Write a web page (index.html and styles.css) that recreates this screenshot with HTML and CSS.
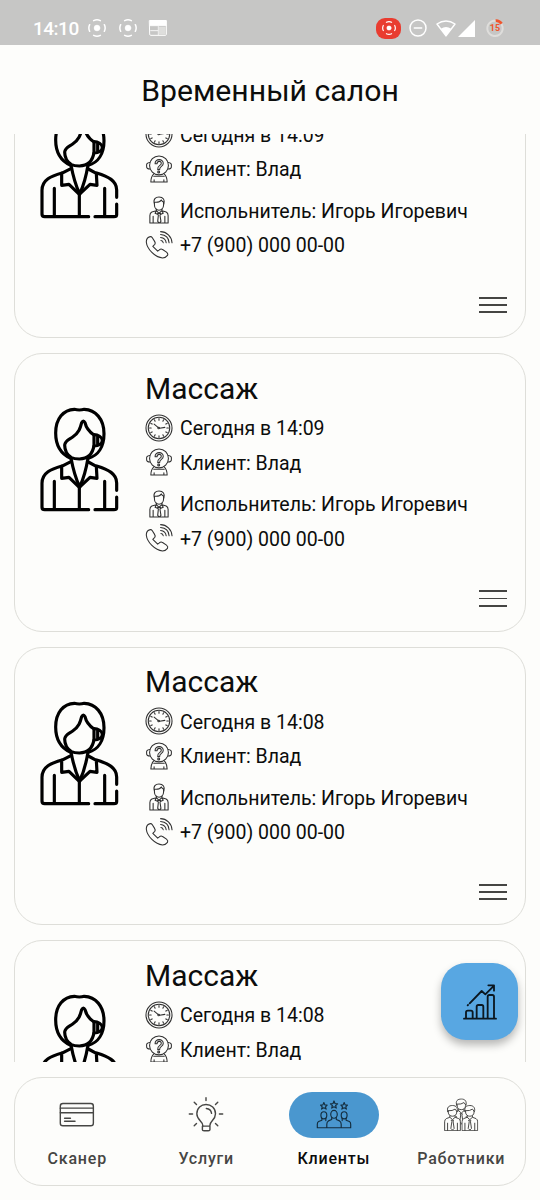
FILE: index.html
```html
<!DOCTYPE html>
<html lang="ru">
<head>
<meta charset="utf-8">
<title>Временный салон</title>
<link rel="stylesheet" href="styles.css">
</head>
<body>
<svg class="sprite" aria-hidden="true">
  <symbol id="person" viewBox="0 0 330 390">
    <g stroke-width="9.5">
      <path d="M137 190C106 176 92 148 92 114C92 70 116 44 148 43Q163 47 178 43C211 44 237 72 237 116C237 156 219 182 190 190"/>
      <path d="M139 188C124 178 119 164 119 150C120 137 131 134 143 126C162 113 166 99 170 83Q175 73 180 83C184 101 195 112 207 120V151C203 178 187 192 163 192Q148 192 139 188Z"/>
      <path d="M207 119C220 119 230 126 232 135C232 147 221 153 207 153M218 124V149"/>
      <path d="M138 189Q147 239 164 276Q181 239 189 189"/>
      <path d="M139 199L110 214V250L132 247L163 277L195 247L216 250L214 214L190 201"/>
      <path d="M111 213C79 222 51 233 51 265V337Q51 344 59 344H191M215 213C250 224 275 236 275 264V286M275 306V338Q275 344 267 344H210M88 259V343M239 259V343M163 277V343"/>
    </g>
  </symbol>
  <symbol id="clock" viewBox="0 0 86 86">
    <circle cx="43" cy="43" r="40"/><circle cx="43" cy="43" r="33"/>
    <path d="M28 31L40 41M45 44L61 41"/><circle cx="42" cy="43" r="2.5"/>
    <path d="M43 14V19M43 67V72M14 43H19M67 43H72M29 18L31 22M57 18L55 22M18 29L22 31M68 29L64 31M18 57L22 55M68 57L64 55M29 68L31 64M57 68L55 64"/>
  </symbol>
  <symbol id="client" viewBox="0 0 86 86">
    <circle cx="43" cy="32" r="29"/>
    <path d="M15 23C6 24 4 27 5 34C4 40 8 43 15 43M71 23C80 24 82 27 81 34C82 40 78 43 71 43"/>
    <path d="M31 27C30 10 57 10 56 26C56 36 44 34 45 45H39C38 30 50 34 50 25C50 17 37 18 37 27Z"/><circle cx="42" cy="52" r="3"/>
    <path d="M27 58C20 65 18 73 18 83H68C68 73 66 65 59 58M27 65H59M28 76V83M58 76V83"/>
  </symbol>
  <symbol id="worker" viewBox="0 0 86 86">
    <path d="M29 25C24 9 33 3 43 3C56 3 62 12 58 25M29 19C37 20 47 17 50 12C52 17 55 18 57 19M29 19V28C29 49 57 49 57 28V19"/>
    <path d="M35 40V45L43 53L52 45V40M35 45L21 49Q15 52 15 60V83H71V60Q71 52 65 49L52 45M35 45L31 53L40 57M52 45L56 53L47 57M39 54H48L46 59L49 78L44 83L39 78L41 59ZM25 62V83M61 62V83"/>
  </symbol>
  <symbol id="phone" viewBox="0 0 86 86">
    <path d="M14 18Q4 21 4 34C6 56 31 81 54 83Q63 83 69 75Q72 70 66 65L54 57Q49 53 44 58L39 62L24 47L30 41Q33 37 29 31L22 20Q19 16 14 18"/>
    <path d="M48 2C66 2 82 18 83 36M48 11C63 12 73 22 74 36M48 20C57 21 64 27 65 36M49 29Q55 30 56 36"/>
  </symbol>
  <symbol id="rec" viewBox="0 0 54 54">
    <circle cx="27" cy="27" r="9" fill="currentColor"/>
    <path d="M17 5Q27 0 37 5M17 49Q27 54 37 49M5 17Q0 27 5 37M49 17Q54 27 49 37" stroke-width="4.5"/>
  </symbol>
  <symbol id="coworker" viewBox="0 0 52 80">
    <path d="M18 33V38L7 42Q2 45 2 52V79H50V52Q50 45 45 42L34 38V33Z"/>
    <path d="M13 16V22C13 39 39 39 39 22V16"/>
    <path d="M12 21C7 8 15 2 26 2C38 2 43 10 40 21L34 13Q27 19 12 18Z"/>
    <path d="M18 38L26 45L34 38M23 47H29L28 52L31 72L26 77L21 72L24 52ZM11 56V79M41 56V79"/>
  </symbol>
</svg>

<div class="screen">
  <header class="status">
    <span class="time">14:10</span>
    <svg class="rec first"><use href="#rec"/></svg>
    <svg class="rec second"><use href="#rec"/></svg>
    <svg class="calendar" viewBox="0 0 54 48"><path d="M2 2H52V43Q52 46 49 46H5Q2 46 2 43Z" stroke-width="3"/><path d="M2 0H52V17H2Z" fill="currentColor" stroke="none"/><path d="M3 17H51M28 20V44M5 32H27" stroke-width="2.5"/><path d="M29 21H50V44H29Z" fill="#dededc" stroke="none"/></svg>
    <span class="recording"><svg class="rec small"><use href="#rec"/></svg></span>
    <svg class="dnd" viewBox="0 0 54 54"><circle cx="27" cy="27" r="24" stroke-width="4.5"/><path d="M16 27H38" stroke-width="4.5"/></svg>
    <svg class="wifi" viewBox="0 0 62 52"><path d="M3 12Q31 -7 59 12L31 49Z" stroke-width="4.5"/><path d="M15 27Q31 16 47 27L31 49Z" fill="currentColor" stroke="none"/></svg>
    <svg class="signal" viewBox="0 0 52 52"><path d="M52 0V52H0Z" fill="currentColor" stroke="none"/></svg>
    <span class="battery"><svg viewBox="0 0 54 54"><circle cx="27" cy="28" r="23" stroke="#dedddb" stroke-width="6" stroke-dasharray="5 1.2"/><path d="M29 5Q39 4 47 14" stroke="#f0552d" stroke-width="8" stroke-linecap="butt"/></svg><b>15</b></span>
  </header>

  <h1 class="title">Временный салон</h1>

  <main class="list">
    <article class="card">
      <svg class="avatar"><use href="#person"/></svg>
      <div class="info">
        <h2>Массаж</h2>
        <p><svg><use href="#clock"/></svg>Сегодня в 14:09</p>
        <p><svg><use href="#client"/></svg>Клиент: Влад</p>
        <p class="performer"><svg><use href="#worker"/></svg>Испольнитель: Игорь Игоревич</p>
        <p><svg><use href="#phone"/></svg>+7 (900) 000 00-00</p>
      </div>
      <span class="menu"><i></i><i></i><i></i></span>
    </article>
    <article class="card">
      <svg class="avatar"><use href="#person"/></svg>
      <div class="info">
        <h2>Массаж</h2>
        <p><svg><use href="#clock"/></svg>Сегодня в 14:09</p>
        <p><svg><use href="#client"/></svg>Клиент: Влад</p>
        <p class="performer"><svg><use href="#worker"/></svg>Испольнитель: Игорь Игоревич</p>
        <p><svg><use href="#phone"/></svg>+7 (900) 000 00-00</p>
      </div>
      <span class="menu"><i></i><i></i><i></i></span>
    </article>
    <article class="card">
      <svg class="avatar"><use href="#person"/></svg>
      <div class="info">
        <h2>Массаж</h2>
        <p><svg><use href="#clock"/></svg>Сегодня в 14:08</p>
        <p><svg><use href="#client"/></svg>Клиент: Влад</p>
        <p class="performer"><svg><use href="#worker"/></svg>Испольнитель: Игорь Игоревич</p>
        <p><svg><use href="#phone"/></svg>+7 (900) 000 00-00</p>
      </div>
      <span class="menu"><i></i><i></i><i></i></span>
    </article>
    <article class="card">
      <svg class="avatar"><use href="#person"/></svg>
      <div class="info">
        <h2>Массаж</h2>
        <p><svg><use href="#clock"/></svg>Сегодня в 14:08</p>
        <p><svg><use href="#client"/></svg>Клиент: Влад</p>
      </div>
    </article>
  </main>

  <button class="fab" aria-label="Статистика">
    <svg viewBox="0 0 102 108"><path d="M3 104H99M9 103V85Q9 80 14 80H24Q29 80 29 85V103M41 103V68Q41 63 46 63H56Q61 63 61 68V103M74 103V38Q74 33 79 33H88Q93 33 93 38V103M20 58L56 21L67 31L91 7M76 4H93V20M14 64L15 63"/></svg>
  </button>

  <nav class="nav">
    <a class="tab">
      <span class="pill"><svg viewBox="0 0 110 110"><rect x="4" y="20" width="101" height="68" rx="8"/><path d="M4 34H105M4 48H105M17 65H35M17 74H49"/></svg></span>
      Сканер
    </a>
    <a class="tab">
      <span class="pill"><svg viewBox="0 0 110 110"><path d="M45 91V86C45 75 27 70 27 51C27 33 40 23 55 23C71 23 84 34 84 51C84 70 67 74 67 86V91M44 89H67V100Q67 103 62 103H49Q44 103 44 100ZM56 35Q70 36 72 50M55 2V11M19 16L26 23M91 16L84 23M4 52H14M96 52H106M19 88L26 81M91 88L84 81"/></svg></span>
      Услуги
    </a>
    <a class="tab active">
      <span class="pill"><svg viewBox="0 0 110 110"><path d="M24 17L27 24L34 25L29 30L31 37L24 33L17 37L19 30L14 25L21 24ZM55 12L58 20L66 21L60 26L62 34L55 30L48 34L50 26L44 21L52 20ZM86 17L89 24L96 25L91 30L93 37L86 33L79 37L81 30L76 25L83 24Z"/><ellipse cx="24" cy="56" rx="9" ry="11"/><ellipse cx="55" cy="53" rx="10" ry="12"/><ellipse cx="86" cy="56" rx="9" ry="11"/><path d="M18 65V71L8 75Q4 77 4 83V94H106V83Q106 77 102 75L92 71V65M80 65V72M30 65V72M48 63V69L38 73Q33 76 33 83V94M62 63V69L72 73Q77 76 77 83V94"/></svg></span>
      Клиенты
    </a>
    <a class="tab">
      <span class="pill"><svg class="team" viewBox="0 0 110 110"><use href="#coworker" x="30" y="4" width="52" height="80"/><use href="#coworker" x="3" y="24" width="52" height="80"/><use href="#coworker" x="56" y="24" width="52" height="80"/></svg></span>
      Работники
    </a>
  </nav>
</div>
</body>
</html>
```
FILE: styles.css
```css
* { box-sizing: border-box; }
body { margin: 0; background: #fdfdfb; font-family: Roboto, sans-serif; color: #0c0d0c; }
svg { display: block; fill: none; stroke: currentColor; stroke-linecap: round; stroke-linejoin: round; overflow: visible; flex: none; }
.sprite { display: none; }
.screen { position: relative; width: 540px; height: 1200px; overflow: hidden; display: flex; flex-direction: column; }

.status { height: 45px; flex: none; background: #c6c6c5; color: #fff; display: flex; align-items: center; padding: 11px 0 0 33px; }
.time { width: 45px; padding-top: 1px; font: 500 19px/22px Roboto, sans-serif; letter-spacing: -0.5px; white-space: nowrap; }
.rec { width: 18px; height: 18px; }
.first { margin-left: 10px; }
.second { margin-left: 13px; }
.calendar { width: 18px; height: 16px; margin-left: 12px; }
.recording { width: 25px; height: 21px; border-radius: 9px; background: #e93c30; margin-left: 209px; display: flex; align-items: center; justify-content: center; }
.small { width: 14px; height: 14px; }
.dnd { width: 18px; height: 18px; margin-left: 8px; }
.wifi { width: 20px; height: 17px; margin-left: 9px; }
.signal { width: 17px; height: 17px; margin-left: 2px; }
.battery { display: grid; width: 18px; height: 18px; margin-left: 11px; place-items: center; }
.battery > * { grid-area: 1 / 1; }
.battery svg { width: 18px; height: 18px; }
.battery b { font-size: 9px; line-height: 10px; color: #f0552d; }

.title { margin: 0; height: 89px; flex: none; font-size: 30.2px; font-weight: 400; line-height: 91px; text-align: center; }

.list { height: 928px; flex: none; overflow: hidden; padding: 0 14px; }
.card { position: relative; height: 278.5px; margin-bottom: 15px; border: 1.5px solid #deded9; border-radius: 28px; padding: 0 0 0 10px; display: flex; }
.card:first-child { margin-top: -74.5px; }
.avatar { width: 110px; height: 130px; margin-top: 41px; color: #000; }
.info { padding: 15.5px 0 0 10px; }
.info h2 { margin: 0 0 7.5px; font-size: 30px; font-weight: 400; line-height: 38px; }
.info p { margin: 0 0 6.5px; height: 28px; display: flex; align-items: center; gap: 7px; font-size: 19.5px; line-height: 28px; white-space: nowrap; }
.info p svg { width: 28px; height: 28px; margin-bottom: 3px; stroke-width: 3.3; color: #303030; }
.info .performer { margin-top: 13.5px; }
.menu { position: absolute; right: 18.5px; bottom: 24px; width: 28px; display: grid; gap: 5.5px; }
.menu i { height: 1.7px; background: #454543; }

.fab { position: absolute; left: 441px; top: 963px; width: 77px; height: 77px; padding: 0; border: 0; border-radius: 25px; background: #58a7e2; box-shadow: 0 5px 9px rgba(0,0,0,.28); color: #0b1720; display: flex; align-items: center; justify-content: center; }
.fab svg { width: 34px; height: 36px; stroke-width: 5.5; }

.nav { margin: 15px 14px 0; height: 109px; flex: none; border: 1.5px solid #deded9; border-radius: 28px; display: grid; grid-template-columns: repeat(4, 1fr); }
.tab { display: flex; flex-direction: column; align-items: center; padding-top: 14px; gap: 10px; color: #464644; font-size: 16px; font-weight: 500; line-height: 22px; letter-spacing: .8px; }
.tab:first-child { padding-right: 3px; }
.pill { width: 90px; height: 46px; border-radius: 23px; display: flex; align-items: center; justify-content: center; }
.pill svg { width: 36px; height: 36px; stroke-width: 4.3; }
.pill .team { stroke-width: 3; fill: #fdfdfb; }
.active { color: #0a0b0b; }
.active .pill { background: #4a97cf; }
.active .pill svg { stroke-width: 3.5; color: #142d3e; }
```
